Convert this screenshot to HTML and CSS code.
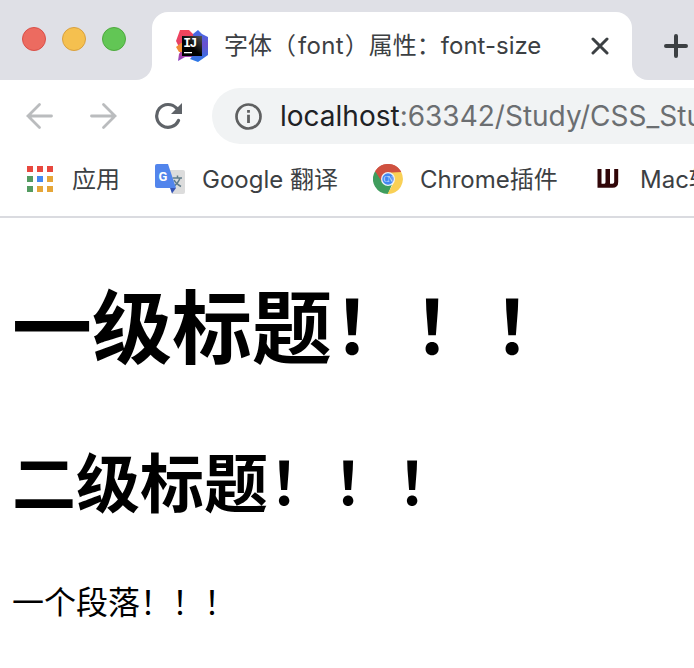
FILE: index.html
```html
<!DOCTYPE html>
<html lang="zh-CN">
<head>
<meta charset="utf-8">
<title>字体（font）属性：font-size</title>
<link rel="stylesheet" href="styles.css">
</head>
<body>
<header class="tabs">
  <div class="lights"><i class="light red"></i><i class="light yellow"></i><i class="light green"></i></div>
  <div class="tab">
    <svg class="idea" width="32" height="32" viewBox="0 0 32 32">
      <defs>
        <linearGradient id="pink" x1="0" y1="0" x2="0" y2="1"><stop offset="0" stop-color="#f4455a"/><stop offset=".45" stop-color="#e54067"/><stop offset="1" stop-color="#8b45c8"/></linearGradient>
        <linearGradient id="blue" x1="0" y1="0" x2="0" y2="1"><stop offset="0" stop-color="#3e70e8"/><stop offset=".45" stop-color="#6b50cf"/><stop offset="1" stop-color="#2879e8"/></linearGradient>
        <linearGradient id="black" x1="1" y1="0" x2=".5" y2=".6"><stop offset="0" stop-color="#555"/><stop offset="1" stop-color="#000"/></linearGradient>
      </defs>
      <path fill="url(#pink)" d="M4 0H13L19 6V27H9L2 31L3 24L5 21L0 11Z"/>
      <path fill="#f18b36" d="M0 17L5 13H9V22H3Z"/>
      <path fill="url(#blue)" d="M17 4L22 0L26 4L32 7V25L22 32L14 29L18 24Z"/>
      <path fill="url(#black)" d="M6 6H26V26H6Z"/>
      <text class="idea-text" x="7.2" y="17">IJ</text>
      <path fill="#fff" d="M8 22H16V23.3H8Z"/>
    </svg>
    <span class="title">字体（<span class="font-word">font</span>）属性：<span>font-size</span></span>
    <svg class="close" width="18" height="18" viewBox="0 0 18 18"><path d="M2 2L16 16M16 2L2 16"/></svg>
  </div>
  <div class="newtab"><svg width="26" height="26" viewBox="0 0 26 26"><path d="M13 3V23M3 13H23"/></svg></div>
</header>
<nav class="toolbar">
  <svg class="arrow" width="28" height="28" viewBox="0 0 28 28"><path d="M25.5 14H2M13.5 2.5L2 14L13.5 25.5"/></svg>
  <svg class="arrow" width="28" height="28" viewBox="0 0 28 28"><path d="M1.5 14H25M13.5 2.5L25 14L13.5 25.5"/></svg>
  <svg class="reload" width="28" height="28" viewBox="0 0 28 28"><path fill="none" stroke="#5f6368" stroke-width="3.2" stroke-linecap="round" d="M22.5 6.2A11.4 11.4 0 1 0 24.5 18.5"/><path fill="#5f6368" d="M28 1V12H17Z"/></svg>
  <div class="address">
    <svg width="28" height="28" viewBox="0 0 28 28"><circle cx="14.5" cy="14.5" r="12" fill="none" stroke="#5f6061" stroke-width="2.7"/><path fill="#5f6061" d="M13.1 8H15.9V10.7H13.1ZM13.1 12.8H15.9V21H13.1Z"/></svg>
    <span class="url"><span class="host">localhost</span><span class="path">:63342/Study/CSS_Study</span></span>
  </div>
</nav>
<nav class="bookmarks">
  <div class="apps"><i class="r"></i><i class="r"></i><i class="r"></i><i class="g"></i><i class="b"></i><i class="y"></i><i class="g"></i><i class="y"></i><i class="y"></i></div>
  <span class="mark apps-label">应用</span>
  <svg class="translate" width="30" height="30" viewBox="0 0 30 30">
    <path fill="#dcdcdc" d="M13 6H28Q30 6 30 8V28Q30 30 28 30H17Z"/>
    <path fill="none" stroke="#607d8b" stroke-width="1.5" d="M17.5 14H27M22.5 11.5V14M25 14Q23 20 17.5 23M19 16Q21 20 26 22.5"/>
    <path fill="#3554b5" d="M15 24H21L17 29.5Z"/>
    <path fill="#5285ec" d="M2 0H13L21 24H2Q0 24 0 22V2Q0 0 2 0Z"/>
    <text class="g-text" x="3.6" y="17">G</text>
  </svg>
  <span class="mark translate-label">Google 翻译</span>
  <svg class="chrome" width="30" height="30" viewBox="0 0 30 30">
    <path fill="#cf5140" d="M15 15L2 7.5A15 15 0 0 1 28 7.5Z"/>
    <path fill="#3f9d5d" d="M15 15L2 7.5A15 15 0 0 0 15 30L20 18Z"/>
    <path fill="#f9d056" d="M15 8H28.2A15 15 0 0 1 14.5 30L21 18Z"/>
    <path fill="#cf5140" d="M2.2 7.2L9 18L10 9L28.2 8L27 6A15 15 0 0 0 3 6Z"/>
    <circle cx="15" cy="15" r="7" fill="#eef3f7"/><circle cx="15" cy="15" r="5.7" fill="#4387f1"/>
    <text class="cn-text" x="10.4" y="17.7">CN</text>
  </svg>
  <span class="mark chrome-label">Chrome插件</span>
  <svg class="w-logo" width="22" height="20" viewBox="0 0 22 20"><path fill="none" stroke="#310608" stroke-width="4" d="M2.5 0V17M10.5 0V13Q10.5 16.8 7.5 16.8H.5M19.2 0V13Q19.2 16.8 15.5 16.8H7M11 0V16"/></svg>
  <span class="mark mac-label">Mac软件</span>
</nav>
<main class="page">
  <h1>一级标题<span class="bang">！！！</span></h1>
  <h2>二级标题<span class="bang">！！！</span></h2>
  <p>一个段落！！！</p>
</main>
</body>
</html>
```

FILE: styles.css
```css
* { box-sizing: border-box; }
body {
  margin: 0;
  width: 694px;
  height: 668px;
  overflow: hidden;
  background: #fff;
  font-family: Inter, "Noto Sans CJK SC", sans-serif;
  color: #3c4043;
}
svg { display: block; flex: none; }
.tabs { display: flex; height: 80px; background: #fff; }
.lights {
  display: flex;
  flex: none;
  gap: 16px;
  width: 152px;
  padding: 27px 0 0 22px;
  background: #dfe0e6;
  border-bottom-right-radius: 16px;
}
.light { width: 24px; height: 24px; border-radius: 50%; border: 1px solid; }
.red { background: #ec6b60; border-color: #d94f48; }
.yellow { background: #f5c04f; border-color: #d9a03e; }
.green { background: #62c655; border-color: #4eaa3e; }
.tab {
  display: flex;
  flex: none;
  align-items: center;
  width: 480px;
  height: 80px;
  padding: 12px 23px 0 24px;
  background: linear-gradient(#dfe0e6 50%, #fff 50%);
  position: relative;
  isolation: isolate;
}
.tab::before {
  content: "";
  position: absolute;
  z-index: -1;
  inset: 12px 0 0;
  background: #fff;
  border-radius: 16px 16px 0 0;
}
.idea-text { fill: #fff; font: bold 13px "Liberation Mono", monospace; letter-spacing: -1.6px; }
.g-text { fill: #fff; font: bold 13px Roboto, sans-serif; }
.cn-text { fill: #d4e5ff; font: 7.5px "Liberation Serif", serif; letter-spacing: -.8px; }
.title { flex: none; width: 367px; margin-left: 16px; font-size: 24px; line-height: 36px; white-space: nowrap; }
.font-word { letter-spacing: .3px; margin: 0 1px 0 2px; }
.close { stroke: #3c4043; stroke-width: 3; stroke-linecap: round; }
.newtab { flex: 1; padding: 33px 0 0 31px; background: #dfe0e6; border-bottom-left-radius: 16px; overflow: hidden; }
.newtab svg { stroke: #3c4043; stroke-width: 4; stroke-linecap: round; }
.toolbar { display: flex; align-items: center; height: 72px; padding-left: 26px; }
.arrow { margin-right: 36px; fill: none; stroke: #babcbe; stroke-width: 2.8; stroke-linecap: round; }
.reload { margin-right: 30px; }
.address {
  display: flex;
  align-items: center;
  flex: 1;
  min-width: 0;
  height: 56px;
  padding-left: 22px;
  background: #f1f3f4;
  border-radius: 28px 0 0 28px;
  overflow: hidden;
}
.url { margin-left: 18px; font-size: 28px; line-height: 40px; white-space: nowrap; }
.host { color: #202124; }
.path { color: #6b6e71; }
.bookmarks { display: flex; align-items: center; height: 66px; padding: 0 0 10px 27px; border-bottom: 2px solid #dadbe0; overflow: hidden; }
.apps { display: grid; flex: none; grid-template-columns: repeat(3, 6px); grid-auto-rows: 6px; gap: 4px; }
.r { background: #e8483e; }
.g { background: #549b61; }
.b { background: #4388f2; }
.y { background: #e6a638; }
.mark { flex: none; padding-top: 2px; font-size: 24px; line-height: 36px; white-space: nowrap; }
.apps-label { width: 48px; margin: 0 35px 0 19px; }
.translate-label { width: 136px; margin: 0 35px 0 17px; }
.chrome-label { width: 138px; margin: 0 39px 0 17px; }
.mac-label { margin-left: 21px; }
.page { padding: 0 0 0 12px; font-family: "Noto Sans CJK SC", sans-serif; color: #000; white-space: nowrap; }
h1, h2, p { margin: 0; }
h1 { margin-top: 44px; font-size: 80px; line-height: 120px; }
h2 { margin-top: 49px; font-size: 64px; line-height: 96px; }
p { margin-top: 49px; font-size: 32px; line-height: 48px; }
.bang { font-size: .93em; line-height: 1; letter-spacing: .075em; margin-left: .02em; position: relative; top: -.035em; }
```
